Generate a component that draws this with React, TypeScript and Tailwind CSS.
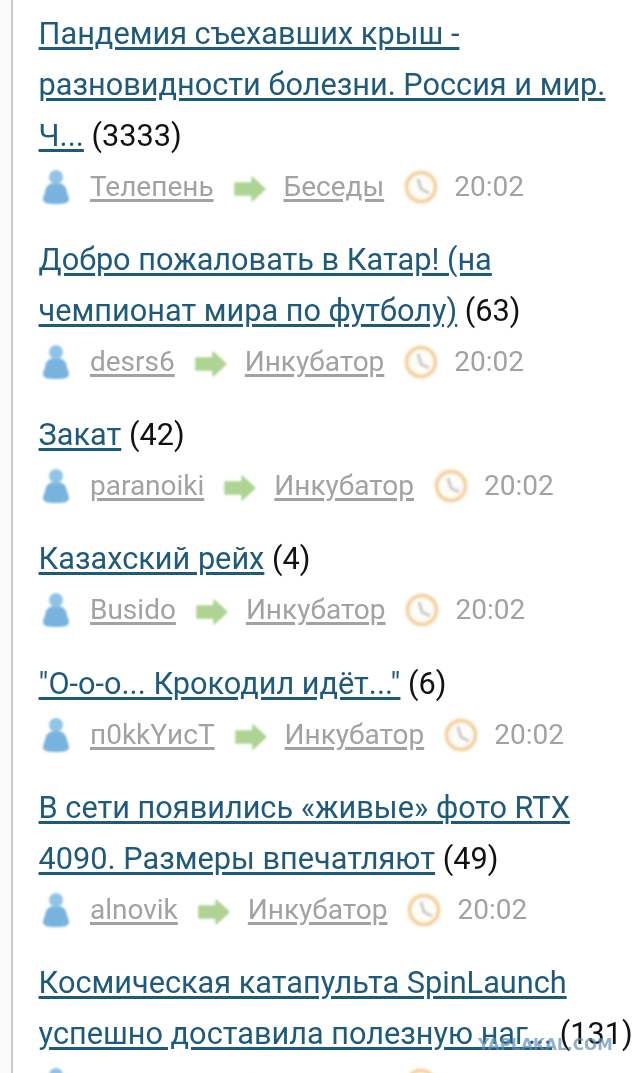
import React from "react";

interface Topic {
    title: string;
    count: number;
    author?: string;
    forum?: string;
}

const topics: Topic[] = [
    {title: "Пандемия съехавших крыш - разновидности болезни. Россия и мир. Ч...", count: 3333, author: "Телепень", forum: "Беседы"},
    {title: "Добро пожаловать в Катар! (на чемпионат мира по футболу)", count: 63, author: "desrs6", forum: "Инкубатор"},
    {title: "Закат", count: 42, author: "paranoiki", forum: "Инкубатор"},
    {title: "Казахский рейх", count: 4, author: "Busido", forum: "Инкубатор"},
    {title: "\"О-о-о... Крокодил идёт...\"", count: 6, author: "п0kkYисТ", forum: "Инкубатор"},
    {title: "В сети появились «живые» фото RTX 4090. Размеры впечатляют", count: 49, author: "alnovik", forum: "Инкубатор"},
    // last row is cut by the bottom edge, only the icon tops show
    {title: "Космическая катапульта SpinLaunch успешно доставила полезную наг...", count: 131},
];

const UserIcon = () => (
    <svg width="26" height="36" viewBox="0 0 26 36" className="shrink-0 blur-[1.2px]">
        <path d="M13 14c-7 0-10 3-11 9-.5 3-2 4-2 7 0 4 4 5 13 5s13-1 13-5c0-3-1.5-4-2-7-1-6-4-9-11-9z" fill="#78b3df"/>
        <circle cx="13" cy="8" r="7" fill="#90c4e7"/>
    </svg>
);

const ArrowIcon = () => (
    <svg width="34" height="28" viewBox="0 0 34 28" className="mt-[4px] shrink-0 blur-[1.2px]">
        <path d="M2 8h17V2l13 12-13 12v-6H2z" fill="#add492" stroke="#add492" strokeWidth="1.5" strokeLinejoin="round"/>
    </svg>
);

const ClockIcon = () => (
    <svg width="34" height="34" viewBox="0 0 34 34" className="shrink-0 blur-[1px]">
        <circle cx="17" cy="17" r="14.5" fill="#fcfcf8" stroke="#f6d3a3" strokeWidth="4"/>
        <path d="M14 9l3 10 8 4" fill="none" stroke="#cbcbc8" strokeWidth="3"/>
    </svg>
);

const TopicRow = ({topic}: {topic: Topic}) => (
    <div className="mb-[22.7px]">
        <div className="text-[30.7px] leading-[50.8px] text-[#111]">
            <a className="text-[#1e5a7c] underline decoration-[3px] underline-offset-[3px]">{topic.title}</a> ({topic.count})
        </div>
        <div className="flex h-[50.8px] items-center text-[28px] text-[#a2a2a2]">
            <div className="ml-[4.4px] mr-[21px]"><UserIcon/></div>
            <a className={topic.author ? "underline decoration-[3px] underline-offset-[3px]" : "w-[124px]"}>{topic.author}</a>
            <div className="ml-[19px] mr-[17px]"><ArrowIcon/></div>
            <a className={topic.forum ? "underline decoration-[3px] underline-offset-[3px]" : "w-[100px]"}>{topic.forum}</a>
            <div className="ml-[20px] mr-[16px]"><ClockIcon/></div>
            {topic.author && <span>20:02</span>}
        </div>
    </div>
);

export default function App() {
    return (
        <div className="relative h-[1073px] w-[640px] overflow-hidden bg-[#fbfbfb] font-['Roboto',sans-serif]">
            <div className="ml-[11px] h-full border-l-2 border-[#c9c9c9] bg-white pl-[25.6px] pr-[3.4px] pt-[9px] blur-[0.4px]">
                {topics.map((topic) => (
                    <TopicRow key={topic.title} topic={topic}/>
                ))}
            </div>
            <div className="absolute left-[478px] top-[1034px] font-['DejaVu_Sans',sans-serif] text-[15.5px] font-bold text-[#5f8fb0]/70 blur-[0.6px]">
                YAPLAKAL.COM
            </div>
        </div>
    );
}
